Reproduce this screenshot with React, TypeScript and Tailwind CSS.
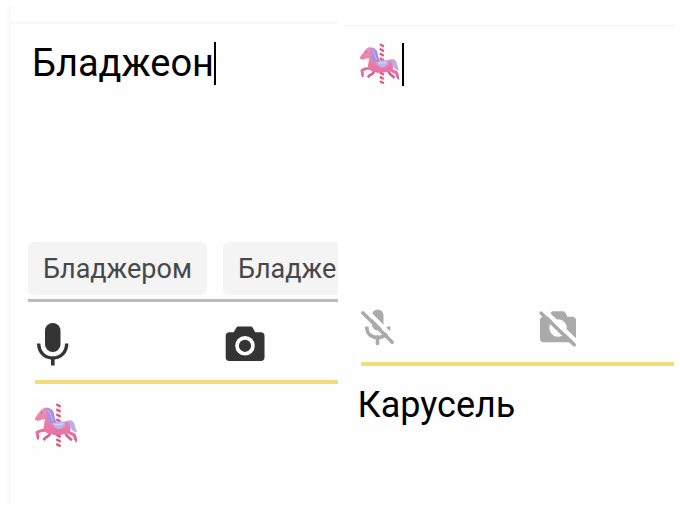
import React, { FC, ReactNode, useState } from 'react';

type IconProps = { className?: string };

const CarouselHorse: FC<IconProps> = ({ className }) => (
  <svg viewBox="26 23 132 132" className={className} role="img" aria-label="Карусель">
    <defs>
      <linearGradient id="mane" x1="0" y1="0" x2="1" y2="1">
        <stop offset="0" stopColor="#b995dd" />
        <stop offset="1" stopColor="#9d8fe0" />
      </linearGradient>
      <linearGradient id="coat" x1="0" y1="0" x2="0" y2="1">
        <stop offset="0" stopColor="#ee92b4" />
        <stop offset="1" stopColor="#e870a3" />
      </linearGradient>
    </defs>
    {/* Pole */}
    <rect x="93" y="24" width="13" height="130" rx="2" fill="#f9dfe6" />
    <path
      d="M93 27l13 7M93 42l13 7M93 57l13 7M93 72l13 7M93 118l13 7M93 132l13 7M93 146l13 7"
      stroke="#cb5578"
      strokeWidth="6"
    />
    {/* Tail */}
    <path d="M117 84c4-10 19-13 27-4 6 7 4 18 12 31-12 0-19-8-22-19-3-5-10-5-16 0z" fill="#b7aeea" />
    {/* Far legs */}
    <path d="M78 106c-3 10-8 17-16 20l-8 8" stroke="#d45f96" strokeWidth="8" fill="none" strokeLinejoin="round" />
    <path d="M116 106l10 17 14 12" stroke="#d45f96" strokeWidth="8" fill="none" strokeLinejoin="round" />
    {/* Near front leg */}
    <path d="M66 104c-10 0-20 0-31 7l3 14" stroke="#e66fa1" strokeWidth="9" fill="none" strokeLinejoin="round" />
    {/* Near hind leg */}
    <path d="M122 103l12 10 12 5 5 14" stroke="#e66fa1" strokeWidth="10" fill="none" strokeLinejoin="round" />
    {/* Body */}
    <path
      d="M61 36l2 7c16 6 18 22 26 34 12 6 24-1 34 2 11 4 14 16 12 27-2 8-11 9-19 9-12 6-28 6-37 1-9 0-17-4-23-9-3-11 1-22 3-35-8-1-13 3-20 4l-8-1c-5-6 3-14 11-24 4-7 10-12 19-15z"
      fill="url(#coat)"
    />
    {/* Mane */}
    <path d="M59 38c13-3 25 4 27 17 2 8 2 13 5 19 2 6-1 10-6 11-14-3-21-12-21-24 0-9 1-16-5-23z" fill="url(#mane)" />
    <path d="M68 45c9 8 8 23 16 33" stroke="#ccb7ee" strokeWidth="3" fill="none" />
    {/* Saddle */}
    <path d="M80 83c7 0 11 1 16-2 8-4 14-2 22 0l2 12c-7 0-8 7-15 8-10 2-19-3-25-18z" fill="#b9b6ee" />
    <path d="M88 86c8 4 17 0 26-1" stroke="#d8d5f7" strokeWidth="4" fill="none" />
    <circle cx="49" cy="52" r="2" fill="#8a4676" />
    <path d="M33 124l8-1 0 8-4 3zM147 131l8 0-1 11-5-4z" fill="#d95893" />
  </svg>
);

const MicIcon: FC<IconProps> = ({ className }) => (
  <svg viewBox="0 0 32 44" className={className} fill="currentColor" aria-hidden="true">
    <rect x="8" y="1" width="15.5" height="29" rx="7.75" />
    <path d="M1.7 21.5c0 9 6.3 14.5 14 14.5s14-5.5 14-14.5" fill="none" stroke="currentColor" strokeWidth="3.4" />
    <rect x="14" y="35" width="3.6" height="8.5" />
  </svg>
);

const CameraIcon: FC<IconProps> = ({ className }) => (
  <svg viewBox="0 0 40 36" className={className} fill="currentColor" aria-hidden="true">
    <path
      fillRule="evenodd"
      d="M13.5.5h12c1.2 0 1.7.4 2.3 1.4l2.5 4.4h5.7c2 0 3.5 1.5 3.5 3.5v21.7c0 2-1.5 3.5-3.5 3.5H4.2c-2 0-3.5-1.5-3.5-3.5V9.8c0-2 1.500-3.500 3.500-3.500h4.500l2.500-4.400c.6-1 1.100-1.400 2.300-1.400zM20 10a9.800 9.800 0 1 0 0 19.600A9.800 9.800 0 0 0 20 10z"
    />
    <circle cx="20" cy="19.8" r="6.1" />
  </svg>
);

const MicOffIcon: FC<IconProps> = ({ className }) => (
  <svg viewBox="0 0 34 38" className={className} fill="none" stroke="currentColor" aria-hidden="true">
    <rect x="11" y="0.5" width="11.5" height="21" rx="5.75" fill="currentColor" stroke="none" />
    <path d="M5.7 17.5c0 7 4.500 11 11 11s11-4 11-11" strokeWidth="3.6" />
    <path d="M16.5 28v6.500" strokeWidth="3.6" strokeLinecap="round" />
    <path d="M4.5 .5l32 32" stroke="white" strokeWidth="4" />
    <path d="M1.8 3.8l29.4 29.4" strokeWidth="3.4" strokeLinecap="round" />
  </svg>
);

const CameraOffIcon: FC<IconProps> = ({ className }) => (
  <svg viewBox="0 0 38 36" className={className} fill="currentColor" aria-hidden="true">
    <path
      fillRule="evenodd"
      d="M14 .3h9.500c2.200 0 2.700 1 3.500 2.500l1.500 3h5c2 0 3.500 1.500 3.500 3.500v18.400c0 2-1.500 3.500-3.500 3.500H4.500c-2 0-3.500-1.500-3.500-3.500V9.300c0-2 1.500-3.500 3.500-3.500h5.500l1.500-3C12.100 1.500 12.500.3 14 .3zM19 8.300a8.700 8.700 0 1 0 0 17.400 8.700 8.700 0 0 0 0-17.400z"
    />
    <path d="M4.5-1.500l36 35" stroke="white" strokeWidth="4.2" />
    <path d="M2.2 2.200l33 31.500" stroke="currentColor" strokeWidth="3.6" strokeLinecap="round" />
  </svg>
);

const Caret = () => <span className="h-[43px] w-0.5 shrink-0 bg-black" aria-hidden="true" />;

const Suggestion: FC<{ children: ReactNode }> = ({ children }) => (
  <button
    type="button"
    className="h-[53px] shrink-0 rounded-md bg-[#f4f4f4] px-[15px] text-left text-[27px] leading-8 text-[#484848] last:flex-1 last:rounded-r-none last:pr-0"
  >
    {children}
  </button>
);

const App = () => {
  const [text, setText] = useState('Бладжеон');

  return (
    <main className="grid min-h-screen grid-cols-2 gap-1.5 bg-white py-1.5 pr-1.5 pl-[7px] font-[Roboto,sans-serif] text-black">
      <section className="min-w-0 overflow-hidden border-l-4 border-[#f9f9f9] bg-[#fefefe]">
        <div className="h-[18px] border-b-2 border-[#f7f7f7]" />

        <div className="flex h-[218px] items-start pt-[18px] pl-[21px]">
          <input
            aria-label="Текст для перевода"
            value={text}
            onChange={(e) => setText(e.target.value)}
            className="field-sizing-content h-[43px] min-w-0 text-[38px] leading-[43px] caret-transparent outline-none"
          />
          <Caret />
        </div>

        <div className="ml-[17px] flex gap-4 overflow-hidden border-b-3 border-[#bcbcbc] pb-1">
          <Suggestion>Бладжером</Suggestion>
          <Suggestion>Бладже</Suggestion>
        </div>

        <div className="ml-6 flex h-[82px] items-center border-b-4 border-[#f5dc78] pt-1.5 pl-0.5">
          <button type="button" aria-label="Голосовой ввод" className="text-[#343434]">
            <MicIcon className="h-11 w-8" />
          </button>
          <button type="button" aria-label="Камера" className="ml-39 text-[#343434]">
            <CameraIcon className="h-9 w-10" />
          </button>
        </div>

        <output className="block pt-[19px] pl-[23px]">
          <CarouselHorse className="size-11" />
        </output>
      </section>

      <section className="min-w-0 overflow-hidden bg-[#fefefe]">
        <div className="h-[21px] border-b-2 border-[#f7f7f7]" />

        <div
          role="textbox"
          aria-label="Текст для перевода"
          tabIndex={0}
          className="flex h-[270px] items-start gap-0.5 pt-4 pl-[15px] outline-none"
        >
          <CarouselHorse className="size-[41px]" />
          <Caret />
        </div>

        <div className="ml-[17px] flex h-[69px] items-start border-b-4 border-[#f5dc78] pt-3">
          <button type="button" disabled aria-label="Голосовой ввод недоступен" className="text-[#aaaaaa]">
            <MicOffIcon className="h-[38px] w-[34px]" />
          </button>
          <button type="button" disabled aria-label="Камера недоступна" className="mt-0.5 ml-36 text-[#aaaaaa]">
            <CameraOffIcon className="h-9 w-[38px]" />
          </button>
        </div>

        <output className="block pt-[17px] pl-[14px] text-4xl leading-[44px]">Карусель</output>
      </section>
    </main>
  );
};

export default App;
